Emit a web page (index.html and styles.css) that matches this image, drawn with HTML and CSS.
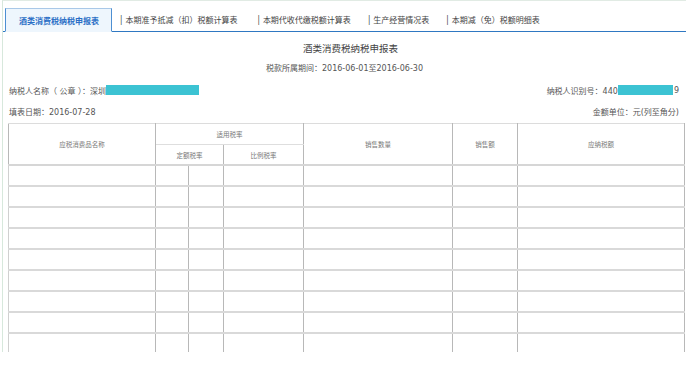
FILE: index.html
```html
<!DOCTYPE html>
<html lang="zh-CN">
<head>
<meta charset="utf-8">
<title>酒类消费税纳税申报表</title>
<link rel="stylesheet" href="styles.css">
</head>
<body>
<div class="page">
  <div class="tabs">
    <div class="tab active">酒类消费税纳税申报表</div>
    <div class="tab tab-wide"><span class="sep">|</span>本期准予抵减（扣）税额计算表</div>
    <div class="tab"><span class="sep">|</span>本期代收代缴税额计算表</div>
    <div class="tab"><span class="sep">|</span>生产经营情况表</div>
    <div class="tab"><span class="sep">|</span>本期减（免）税额明细表</div>
  </div>
  <div class="title">酒类消费税纳税申报表</div>
  <div class="period">税款所属期间：2016-06-01至2016-06-30</div>
  <div class="info">
    <div class="field">纳税人名称（ 公章 ）：深圳<span class="mask mask-name"></span></div>
    <div class="field">纳税人识别号：440<span class="mask mask-id"></span>9</div>
  </div>
  <div class="info info-date">
    <div class="field">填表日期：2016-07-28</div>
    <div class="field">金额单位：元(列至角分)</div>
  </div>
  <table class="grid">
    <colgroup>
      <col class="c1"><col class="c2"><col class="c3"><col class="c4"><col class="c5"><col class="c6"><col class="c7">
    </colgroup>
    <thead>
      <tr class="h1">
        <th rowspan="2">应税消费品名称</th>
        <th colspan="3" class="split">适用税率</th>
        <th rowspan="2">销售数量</th>
        <th rowspan="2">销售额</th>
        <th rowspan="2">应纳税额</th>
      </tr>
      <tr class="h2">
        <th colspan="2">定额税率</th>
        <th>比例税率</th>
      </tr>
    </thead>
    <tbody>
      <tr><td></td><td></td><td></td><td></td><td></td><td></td><td></td></tr>
      <tr><td></td><td></td><td></td><td></td><td></td><td></td><td></td></tr>
      <tr><td></td><td></td><td></td><td></td><td></td><td></td><td></td></tr>
      <tr><td></td><td></td><td></td><td></td><td></td><td></td><td></td></tr>
      <tr><td></td><td></td><td></td><td></td><td></td><td></td><td></td></tr>
      <tr><td></td><td></td><td></td><td></td><td></td><td></td><td></td></tr>
      <tr><td></td><td></td><td></td><td></td><td></td><td></td><td></td></tr>
      <tr><td></td><td></td><td></td><td></td><td></td><td></td><td></td></tr>
      <tr><td></td><td></td><td></td><td></td><td></td><td></td><td></td></tr>
    </tbody>
  </table>
</div>
</body>
</html>
```
FILE: styles.css
```css
html, body {
  margin: 0;
  padding: 0;
  background: #fff;
}
body {
  font-family: "Noto Sans CJK SC", "Noto Sans", sans-serif;
  color: #555;
}
.page {
  margin-left: 2px;
  width: 684px;
  height: 352px;
  box-sizing: border-box;
  border-left: 1px solid #d7e8dc;
  border-top: 1px solid #e1ebe4;
  overflow: hidden;
}
.tabs {
  display: flex;
  align-items: stretch;
  height: 23px;
  margin-top: 7px;
  padding-left: 2px;
  border-bottom: 1px solid #2f78c2;
}
.tab {
  display: flex;
  align-items: center;
  font-size: 8px;
  color: #444;
  padding: 0 9px 0 8px;
  white-space: nowrap;
}
.tab-wide {
  padding-right: 12px;
}
.tab .sep {
  color: #333;
  margin-right: 3px;
  font-size: 9px;
}
.tab.active {
  color: #2b6fc6;
  font-weight: bold;
  padding: 0 12px 0 13px;
  background: #eef6fd;
  border: 1px solid #4d8fd2;
  border-top-color: #a9c8e8;
  border-bottom: 1px solid #eef6fd;
  margin-bottom: -1px;
}
.title {
  margin-top: 6px;
  line-height: 20px;
  font-size: 9.5px;
  text-align: center;
  color: #444;
  padding-left: 12px;
}
.period {
  margin-top: 1px;
  line-height: 20px;
  font-size: 8px;
  text-align: center;
  color: #555;
  font-family: "DejaVu Sans", "Noto Sans CJK SC", sans-serif;
}
.info {
  display: flex;
  justify-content: space-between;
  align-items: center;
  height: 22px;
  padding: 0 7px 0 6px;
  font-size: 8px;
  color: #555;
  font-family: "DejaVu Sans", "Noto Sans CJK SC", sans-serif;
}
.info-date {
  height: 20px;
}
.field {
  display: flex;
  align-items: center;
  white-space: nowrap;
}
.mask {
  display: inline-block;
  height: 10px;
  background: #3cc3d3;
}
.mask-name {
  width: 93px;
}
.mask-id {
  width: 55px;
  margin-right: 1px;
}
.grid {
  margin-top: 2px;
  margin-left: 5px;
  width: 677px;
  border-collapse: collapse;
  table-layout: fixed;
}
.c1 { width: 147px; }
.c2 { width: 33px; }
.c3 { width: 35px; }
.c4 { width: 80px; }
.c5 { width: 149px; }
.c6 { width: 65px; }
.c7 { width: 167px; }
.grid th {
  font-weight: normal;
  font-size: 6.5px;
  color: #777;
  padding: 0;
  border: 1px solid #b8b8b8;
  border-top: 1px solid #dcdcdc;
  border-bottom: 2px solid #d6d6d6;
}
.grid .h1 th {
  height: 20px;
}
.grid .h1 th.split {
  border-bottom: 1px solid #dedede;
}
.grid .h2 th {
  height: 19px;
}
.grid td {
  padding: 0;
  height: 19px;
  border-left: 1px solid #b8b8b8;
  border-right: 1px solid #b8b8b8;
  border-bottom: 2px solid #d9d9d9;
}
.grid td:nth-child(1) {
  border-left-color: #d0d0d0;
}
```
